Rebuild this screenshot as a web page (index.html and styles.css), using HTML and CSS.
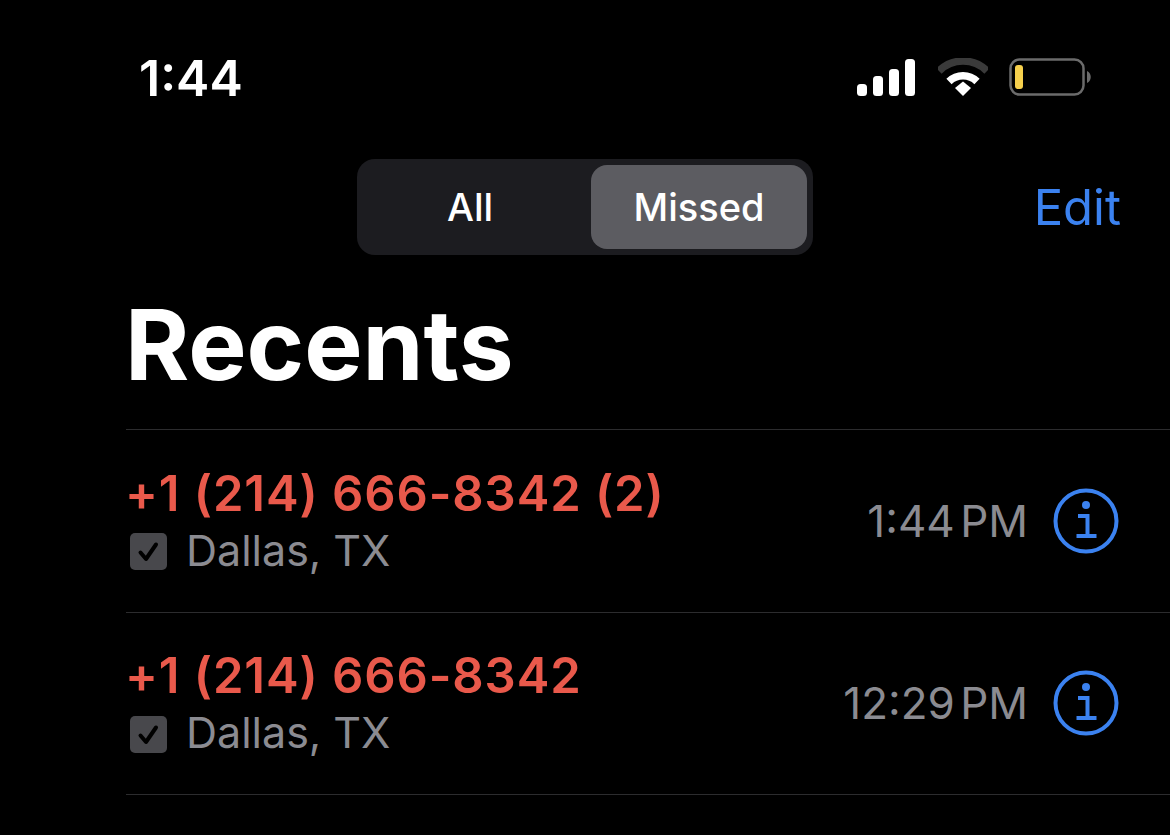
FILE: index.html

```html
<!DOCTYPE html>
<html lang="en">

<head>
    <meta charset="UTF-8">
    <title>Recents</title>
    <link rel="stylesheet" href="styles.css">
</head>

<body>
    <div class="status-bar">
        <span class="clock">1:44</span>
        <div class="status-icons">
            <svg class="signal" width="58" height="37" viewBox="0 0 58 37">
                <rect x="0" y="25" width="10" height="12" rx="3.5" fill="#fff" />
                <rect x="16" y="17" width="10" height="20" rx="3.5" fill="#fff" />
                <rect x="32" y="10" width="10" height="27" rx="3.5" fill="#fff" />
                <rect x="48" y="0" width="10" height="37" rx="3.5" fill="#fff" />
            </svg>
            <svg class="wifi" width="50" height="38" viewBox="0 0 50 38">
                <path d="M1 13 A34 34 0 0 1 49 13" fill="none" stroke="#3a3a3a" stroke-width="7.5" />
                <path d="M11 23.5 A20 20 0 0 1 39 23.5" fill="none" stroke="#fff" stroke-width="7.5" />
                <path d="M17 30 L25 23.5 L33 30 L25 38 Z" fill="#fff" />
            </svg>
            <svg class="battery" width="83" height="38" viewBox="0 0 83 38">
                <rect x="1.5" y="1.5" width="73" height="35" rx="9" fill="none" stroke="#6b6b6b" stroke-width="2.5" />
                <rect x="6" y="7" width="8" height="24" rx="3" fill="#f6d04d" />
                <path d="M78 13 C83 15 83 23 78 25 Z" fill="#6b6b6b" />
            </svg>
        </div>
    </div>

    <div class="nav-bar">
        <div class="segments">
            <div class="segment first">All</div>
            <div class="segment active">Missed</div>
        </div>
        <a class="edit">Edit</a>
    </div>

    <h1 class="title">Recents</h1>

    <div class="call-list">
        <div class="call-row">
            <div class="call-info">
                <div class="number">+1 (214) 666-8342 (2)</div>
                <div class="place">
                    <svg class="check-box" width="37" height="37" viewBox="0 0 37 37">
                        <rect width="37" height="37" rx="5" fill="#48484c" />
                        <path d="M10.5 19.5 L16 26 L26 11.5" fill="none" stroke="#000" stroke-width="4" stroke-linecap="round" stroke-linejoin="round" />
                    </svg>
                    Dallas, TX
                </div>
            </div>
            <span class="call-time">1:44 PM</span>
            <svg class="info-icon" width="66" height="66" viewBox="0 0 66 66">
                <circle cx="33" cy="33" r="30.5" fill="none" stroke="#3b82f0" stroke-width="4" />
                <circle cx="33" cy="17" r="4" fill="#3b82f0" />
                <path d="M25 28 H34.5 V48 M23.5 48 H43.5" fill="none" stroke="#3b82f0" stroke-width="4" />
            </svg>
        </div>
        <div class="call-row">
            <div class="call-info">
                <div class="number">+1 (214) 666-8342</div>
                <div class="place">
                    <svg class="check-box" width="37" height="37" viewBox="0 0 37 37">
                        <rect width="37" height="37" rx="5" fill="#48484c" />
                        <path d="M10.5 19.5 L16 26 L26 11.5" fill="none" stroke="#000" stroke-width="4" stroke-linecap="round" stroke-linejoin="round" />
                    </svg>
                    Dallas, TX
                </div>
            </div>
            <span class="call-time">12:29 PM</span>
            <svg class="info-icon" width="66" height="66" viewBox="0 0 66 66">
                <circle cx="33" cy="33" r="30.5" fill="none" stroke="#3b82f0" stroke-width="4" />
                <circle cx="33" cy="17" r="4" fill="#3b82f0" />
                <path d="M25 28 H34.5 V48 M23.5 48 H43.5" fill="none" stroke="#3b82f0" stroke-width="4" />
            </svg>
        </div>
    </div>
</body>

</html>
```

FILE: styles.css

```css
* {
    margin: 0;
    padding: 0;
    box-sizing: border-box;
    font-family: Inter, "Liberation Sans", sans-serif;
}
body {
    background-color: #000;
    color: #fff;
    height: 835px;
    overflow: hidden;
}
.status-bar {
    display: flex;
    align-items: center;
    justify-content: space-between;
    height: 60px;
    margin-top: 48px;
    padding: 0 78px 0 139px;
}
.clock {
    font-size: 50px;
    font-weight: 600;
}
.status-icons {
    display: flex;
    align-items: center;
    gap: 22px;
    margin-bottom: 2px;
}
.signal {
    margin-right: 1px;
}
.wifi {
    margin-right: -1px;
}
.nav-bar {
    position: relative;
    display: flex;
    justify-content: center;
    margin-top: 51px;
    height: 96px;
}
.segments {
    display: flex;
    width: 456px;
    height: 96px;
    padding: 6px;
    background-color: #1c1c20;
    border-radius: 18px;
}
.segment {
    flex: 1;
    display: flex;
    align-items: center;
    justify-content: center;
    font-size: 38px;
    font-weight: 500;
    border-radius: 16px;
}
.segment.first {
    padding-right: 14px;
}
.segment.active {
    flex: 0 0 216px;
    background-color: #5c5c61;
}
.edit {
    position: absolute;
    right: 49px;
    top: 19px;
    font-size: 49px;
    color: #3b82f0;
}
.title {
    margin: 34px 0 0 125px;
    height: 140px;
    font-size: 98px;
    font-weight: 700;
    line-height: 112px;
}
.call-list {
    margin-left: 126px;
    border-top: 1px solid #2c2c2e;
}
.call-row {
    display: flex;
    align-items: center;
    height: 182.5px;
    padding-right: 51px;
    border-bottom: 1px solid #2c2c2e;
}
.call-info {
    flex: 1;
}
.number {
    margin-left: -1px;
    font-size: 49px;
    font-weight: 600;
    letter-spacing: 0.9px;
    color: #e9594b;
    line-height: 54px;
}
.place {
    display: flex;
    align-items: center;
    gap: 19px;
    padding: 4px 0 0 4px;
    font-size: 43px;
    color: #8b8b91;
    line-height: 50px;
}
.check-box {
    margin-top: 4px;
}
.call-time {
    margin-right: 25px;
    font-size: 44px;
    word-spacing: -7px;
    color: #8b8b91;
}
```
